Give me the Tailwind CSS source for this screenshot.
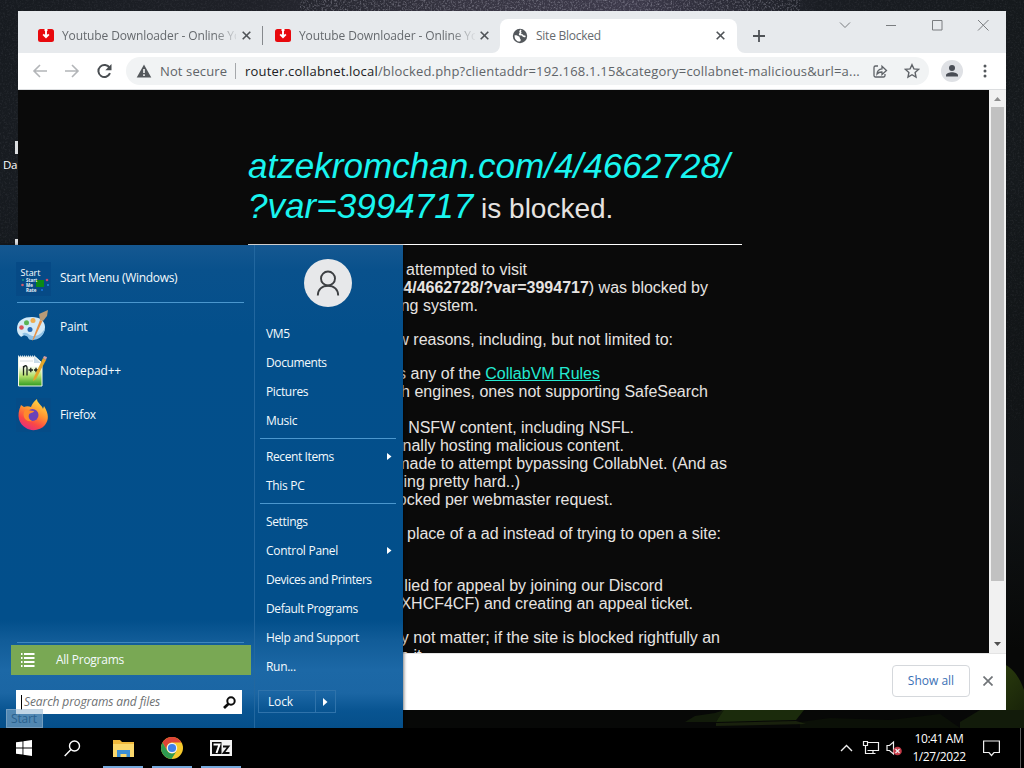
<!DOCTYPE html>
<html lang="en">
<head>
<meta charset="utf-8">
<title>Desktop</title>
<script src="https://cdn.jsdelivr.net/npm/@tailwindcss/browser@4"></script>
</head>
<body class="overflow-hidden">
<div class="relative w-[1024px] h-[768px] overflow-hidden bg-[#14181c] font-['Open_Sans','Noto_Sans',sans-serif]">

  <!-- wallpaper -->
  <svg class="absolute inset-0" width="1024" height="768" viewBox="0 0 1024 768">
    <defs>
      <linearGradient id="sky" x1="0" y1="0" x2="1" y2="0">
        <stop offset="0" stop-color="#171b20"/><stop offset=".25" stop-color="#1f2128"/><stop offset=".45" stop-color="#373542"/><stop offset=".62" stop-color="#3d3a4b"/><stop offset=".8" stop-color="#1a1d23"/><stop offset="1" stop-color="#15191c"/>
      </linearGradient>
      <linearGradient id="dusk" x1="0" y1="0" x2="0" y2="1">
        <stop offset="0" stop-color="#070908" stop-opacity="0"/><stop offset=".5" stop-color="#0b0d0e" stop-opacity=".5"/><stop offset=".8" stop-color="#070807"/>
      </linearGradient>
      <linearGradient id="hill" x1="0" y1="0" x2="1" y2="1">
        <stop offset="0" stop-color="#34490f"/><stop offset="1" stop-color="#141d08"/>
      </linearGradient>
      <filter id="stars" x="0" y="0" width="100%" height="100%">
        <feTurbulence type="fractalNoise" baseFrequency=".55" numOctaves="2" seed="4"/>
        <feColorMatrix values="0 0 0 0 .7  0 0 0 0 .7  0 0 0 0 .8  1.6 0 0 0 -.75"/>
      </filter>
    </defs>
    <rect width="1024" height="768" fill="url(#sky)"/>
    <rect x="300" width="500" height="12" filter="url(#stars)" opacity=".5"/>
    <rect width="1024" height="420" filter="url(#stars)" opacity=".12"/>
    <rect y="180" width="1024" height="588" fill="url(#dusk)"/>
    <path d="M1004 664c9 4 16 14 20 26v40h-60l30-20z" fill="url(#hill)"/>
    <path d="M722 710h82l-8 10-80 2z" fill="#1b2b0c"/>
    <path d="M685 722l10-6 20-3 9-3-8 12zM960 722l20-12h44v18h-64z" fill="#121b0a"/>
    <path d="M800 728v-6l30-4 60 2 50-6 20 14z" fill="#0b1007"/>
    <path d="M716 723l80-2 10 3-90 2z" fill="#2b3a14" opacity=".5"/>
  </svg>
  <div class="absolute left-[3px] top-[157px] text-[11.5px] leading-[16px] text-white tracking-[-0.3px]">Da</div>
  <div class="absolute left-[15px] top-[141px] w-[3px] h-[13px] bg-[#dcdee0]"></div>
  <div class="absolute left-[15px] top-[239px] w-[3px] h-[6px] bg-[#dcdee0]"></div>

  <!-- browser window -->
  <div class="absolute left-[18px] top-[11px] w-[988px] h-[699px] bg-white flex flex-col">
    <div class="h-[42px] bg-[#e7eaed] flex items-start text-[12px] text-[#666a6e] shrink-0">
      <div class="flex h-[42px] pt-[7px] pl-[20px] w-[245px] items-center">
        <svg class="shrink-0" width="16" height="13" viewBox="0 0 16 13"><rect width="16" height="13" rx="2.5" fill="#e8090d"/><path d="M8 2v6M5.2 5.4L8 8.2l2.8-2.8" fill="none" stroke="#fff" stroke-width="1.9"/><path d="M6.500 0h3v2h-3z" fill="#fff"/></svg>
        <div class="ml-[8px] w-[176px] overflow-hidden whitespace-nowrap tracking-[-0.12px] [mask-image:linear-gradient(to_right,#000_152px,transparent_178px)]">Youtube Downloader - Online Yo</div>
        <svg class="ml-[6px] shrink-0" width="9" height="9" viewBox="0 0 9 9"><path d="M.7.700l7.600 7.600M8.300.700L.7 8.300" stroke="#4f5357" stroke-width="1.600"/></svg>
        <div class="ml-[11px] w-px h-[19px] bg-[#86898d] shrink-0"></div>
      </div>
      <div class="flex h-[42px] pt-[7px] pl-[12px] w-[237px] items-center">
        <svg class="shrink-0" width="16" height="13" viewBox="0 0 16 13"><rect width="16" height="13" rx="2.5" fill="#e8090d"/><path d="M8 2v6M5.2 5.4L8 8.2l2.8-2.8" fill="none" stroke="#fff" stroke-width="1.9"/><path d="M6.500 0h3v2h-3z" fill="#fff"/></svg>
        <div class="ml-[8px] w-[176px] overflow-hidden whitespace-nowrap tracking-[-0.12px] [mask-image:linear-gradient(to_right,#000_152px,transparent_178px)]">Youtube Downloader - Online Yo</div>
        <svg class="ml-[5px] shrink-0" width="9" height="9" viewBox="0 0 9 9"><path d="M.7.700l7.600 7.600M8.300.700L.7 8.300" stroke="#4f5357" stroke-width="1.600"/></svg>
      </div>
      <div class="relative mt-[8px] h-[34px] w-[237px] bg-white rounded-t-[8px] flex items-center pl-[12px] pb-[1px]">
        <svg class="absolute left-[-8px] bottom-0" width="8" height="8"><path d="M8 0v8H0a8 8 0 0 0 8-8" fill="#fff"/></svg>
        <svg class="absolute right-[-8px] bottom-0" width="8" height="8"><path d="M0 0v8h8a8 8 0 0 1-8-8" fill="#fff"/></svg>
        <svg class="shrink-0" width="16" height="16" viewBox="0 0 16 16"><circle cx="8" cy="8" r="7.200" fill="#54585c"/><path d="M2.600 7.200c2-.2 3.600.5 4.600 1.400.9.900.3 1.800 1.100 2.300.9.600.4 1.800-.3 2.700-3.300.100-5.800-2.600-5.400-6.400z" fill="#fff"/><path d="M9.200 2.300c-1.200.7-1.400 1.400-.700 2 .8.700-.9 1-.9 1.900 0 .8 2.600.2 3 1.100.4 1 1.300 1.300 2.900.9" fill="none" stroke="#fff" stroke-width="1.600"/></svg>
        <div class="ml-[8px] w-[173px] whitespace-nowrap tracking-[-0.25px]">Site Blocked</div>
        <svg class="ml-[7px] shrink-0" width="9" height="9" viewBox="0 0 9 9"><path d="M.7.700l7.600 7.600M8.300.700L.7 8.300" stroke="#4f5357" stroke-width="1.600"/></svg>
      </div>
      <svg class="mt-[19px] ml-[16px]" width="12" height="12"><path d="M6 0v12M0 6h12" stroke="#4f5357" stroke-width="1.800"/></svg>
      <svg class="ml-auto mr-[15px] mt-[8px]" width="152" height="13" viewBox="0 0 152 13" fill="none" stroke="#7a7d80" stroke-width="1"><path d="M1 3.500l5 5 5-5M47 6.500h10M93.500 1.500h9.500v9.500h-9.500zM139 1l10.500 10.500M149.500 1l-10.500 10.500"/></svg>
    </div>

    <div class="h-[37px] flex items-center shrink-0 border-b border-[#dcdee0] text-[13px] text-[#606468]">
      <svg class="ml-[14px] shrink-0" width="84" height="18" viewBox="0 0 84 18" fill="none" stroke-width="1.600"><g stroke="#b3b5b8"><path d="M15 9H2M8 3L2 9l6 6M33 9h13M40 3l6 6-6 6"/></g><path d="M77.600 6A6 6 0 1 0 78 11.200" stroke="#494d51" stroke-width="2"/><path d="M79.500 2v6.200h-6.200z" fill="#494d51"/></svg>
      <div class="ml-[10px] w-[803px] h-[28px] rounded-full bg-[#f1f3f4] flex items-center whitespace-nowrap">
        <svg class="ml-[10px] shrink-0" width="16" height="14" viewBox="0 0 16 14"><path d="M8 .5L15.300 13.500H.7z" fill="#54585c"/><path d="M8 5v4M8 10.300v1.600" stroke="#fff" stroke-width="1.500"/></svg>
        <div class="ml-[8px] w-[68px] pt-[1px] tracking-[0.12px]">Not secure</div>
        <div class="ml-[7px] w-px h-[16px] bg-[#a5a8ab]"></div>
        <div class="ml-[9px] w-[616px] pt-[1px] tracking-[0.19px]"><span class="text-[#202124]">router.collabnet.local</span>/blocked.php?clientaddr=192.168.1.15&amp;category=collabnet-malicious&amp;url=a...</div>
        <svg class="ml-[11px] shrink-0" width="16" height="16" viewBox="0 0 16 16" fill="none" stroke="#5f6368" stroke-width="1.300"><path d="M6 3H3.500A1.500 1.500 0 0 0 2 4.500v8A1.500 1.500 0 0 0 3.500 14h8a1.500 1.500 0 0 0 1.500-1.500V11"/><path d="M5 11c.2-3.300 2-5 5-5.200V3.200l4.500 4.300-4.500 4V9C7.800 8.900 6.300 9.400 5 11z"/></svg>
        <svg class="ml-[16px] shrink-0" width="16" height="16" viewBox="0 0 16 16" fill="none" stroke="#5f6368" stroke-width="1.400"><path d="M8 1.700l1.900 4.200 4.600.500-3.400 3.100.9 4.500-4-2.300-4 2.300.9-4.500L1.500 6.400l4.600-.5z"/></svg>
      </div>
      <svg class="ml-[12px] shrink-0" width="22" height="22" viewBox="0 0 22 22"><circle cx="11" cy="11" r="11" fill="#dfe1e5"/><circle cx="11" cy="8" r="3" fill="#494d55"/><path d="M5 16.500v-1.300c0-2 3.500-3 6-3s6 1 6 3v1.300z" fill="#494d55"/></svg>
      <svg class="ml-[20px] shrink-0" width="4" height="14" fill="#54585c"><circle cx="2" cy="2" r="1.500"/><circle cx="2" cy="7" r="1.500"/><circle cx="2" cy="12" r="1.500"/></svg>
    </div>

    <div class="h-[563px] flex shrink-0">
      <div class="w-[971px] h-full overflow-hidden bg-[#0a0a0a] pl-[230px] text-[#e6e3e1] font-['Liberation_Sans',Arial,sans-serif] text-[16px] leading-[18px] whitespace-nowrap">
        <h1 class="w-[494px] h-[155px] pt-[59px] border-b border-white text-[28px] leading-[40px]"><em class="text-[35.1px] leading-[0px] text-[#19f5f0]">atzekromchan.com/4/4662728/<br>?var=3994717</em> is blocked.</h1>
        <div class="pt-[16px] flex flex-col items-start">
          <div class="w-[279px] text-right">attempted to visit</div>
          <div class="w-[460px] text-right"><b>4/4662728/?var=3994717</b>) was blocked by</div>
          <div class="w-[230px] text-right">ng system.</div>
          <div class="w-[425px] text-right mt-[16px]">w reasons, including, but not limited to:</div>
          <div class="w-[352px] text-right mt-[16px]">s any of the <span class="underline text-[#24ead2]">CollabVM Rules</span></div>
          <div class="w-[460px] text-right">h engines, ones not supporting SafeSearch</div>
          <div class="w-[386px] text-right mt-[18px]">NSFW content, including NSFL.</div>
          <div class="w-[376px] text-right">nally hosting malicious content.</div>
          <div class="w-[479px] text-right">made to attempt bypassing CollabNet. (And as</div>
          <div class="w-[272px] text-right">ing pretty hard..)</div>
          <div class="w-[365px] text-right">ocked per webmaster request.</div>
          <div class="w-[473px] text-right mt-[16px]">place of a ad instead of trying to open a site:</div>
          <div class="w-[415px] text-right mt-[34px]">lied for appeal by joining our Discord</div>
          <div class="w-[445px] text-right">XHCF4CF) and creating an appeal ticket.</div>
          <div class="w-[472px] text-right mt-[16px]">y not matter; if the site is blocked rightfully an</div>
          <div class="w-[178px] text-right">e it.</div>
        </div>
      </div>
      <div class="w-[17px] bg-[#f1f1f1] flex flex-col items-center">
        <svg width="17" height="17"><path d="M5 11l3.500-4 3.500 4z" fill="#8e8e8e"/></svg>
        <div class="w-[13px] h-[474px] bg-[#c1c1c1]"></div>
        <svg class="mt-auto" width="17" height="17"><path d="M5 6h7l-3.500 4z" fill="#505050"/></svg>
      </div>
    </div>

    <div class="flex-1 flex items-center justify-end border-t border-[#e4e4e4] pb-[2px]">
      <div class="w-[78px] h-[32px] border border-[#d5d8dc] rounded-[4px] flex items-center justify-center text-[12px] font-medium text-[#3a70b5]">Show all</div>
      <svg class="ml-[13px] mr-[13px]" width="10" height="10"><path d="M.5.500l9 9M9.500.500l-9 9" stroke="#707478" stroke-width="1.700"/></svg>
    </div>
  </div>

  <!-- start menu -->
  <div class="absolute left-0 top-[245px] w-[403px] h-[483px] flex text-[12px] text-[#f4fafd] font-medium shadow-[1px_0_3px_rgba(0,0,0,0.5)] bg-[linear-gradient(to_bottom,#155891_0px,#09518c_25px,#034f8b_90px,#024f8b_375px,#115c98_395px,#1c68a6_425px,#1b66a4_448px,#085491_466px,#054f8a_483px)] whitespace-nowrap">
    <div class="w-[254px] flex flex-col pl-[16px]">
      <div class="mt-[16px] flex items-center h-[36px]">
        <svg width="35" height="34" viewBox="0 0 35 34"><rect width="35" height="34" fill="#064a86"/><text x="4.500" y="13.500" font-family="Open Sans" font-size="9.500" font-weight="500" textLength="20" lengthAdjust="spacingAndGlyphs" fill="#fff">Start</text><rect x="20" y="18" width="8" height="7" fill="#0b8a17"/><g font-family="Open Sans" font-size="4.500" font-weight="700" fill="#e8f3fa"><text x="10" y="20">Start</text><text x="10" y="25">Me</text><text x="10" y="30">Rate</text></g><circle cx="6.500" cy="23" r="1.300" fill="#d45b6d"/><circle cx="7" cy="18" r="1" fill="#1b9a83"/><circle cx="31" cy="18" r="1.300" fill="#c9476a"/><circle cx="32" cy="23" r="1.100" fill="#2187d4"/><circle cx="26" cy="28" r="1.100" fill="#1b76d8"/></svg>
        <div class="ml-[9px] pb-[2px] tracking-[-0.3px]">Start Menu (Windows)</div>
      </div>
      <div class="mt-[5px] ml-[1px] w-[227px] h-px bg-[#4b97ce]"></div>
      <div class="mt-[2px] flex items-center h-[44px]">
        <svg class="ml-[-1px]" width="35" height="34" viewBox="0 0 35 34"><path d="M2 19C2 10 9 7 17 7c8 0 13 4 13 10 0 8-6 12-13 12-5 0-3-4-6-4-4 0-4 3-6 1-2-2-3-4-3-7z" fill="#d3eaf7"/><path d="M7 24c5-4 7 3 13 2 5-1 8-4 10-8-1 8-6 12-13 12-5 0-3-4-6-4z" fill="#8fc1e5"/><circle cx="6.500" cy="17.500" r="2.300" fill="#d9525a"/><circle cx="11.500" cy="12.800" r="2.500" fill="#5cb356"/><circle cx="18" cy="10.500" r="2.500" fill="#efad4f"/><circle cx="15" cy="19.500" r="2.500" fill="#2769b4"/><path d="M17 31l8-21 2.500 1L19 29z" fill="#e79044"/><path d="M25 10l-1-6 9-4-1 6-4 5z" fill="#b89b78"/></svg>
        <div class="ml-[10px] tracking-[-0.25px]">Paint</div>
      </div>
      <div class="flex items-center h-[44px]">
        <svg class="ml-[-1px]" width="35" height="34" viewBox="0 0 35 34"><defs><linearGradient id="np" x1="0" y1="0" x2="0" y2="1"><stop offset=".3" stop-color="#fff"/><stop offset=".65" stop-color="#b4e06b"/><stop offset="1" stop-color="#2f9b20"/></linearGradient></defs><path d="M3.500 3h17l6.500 6v23H3.500z" fill="url(#np)" stroke="#f3f8e8"/><path d="M3 2.500h18" stroke="#dfe6ec" stroke-width="2" stroke-dasharray="1 1"/><path d="M19 3l7 6h-7z" fill="#c9dbe8"/><path d="M5 7h13" stroke="#d6dde0"/><path d="M8.500 12v9.500M8.500 14c.5-2.500 3.500-3.500 3.500 0v7.500M13.500 16h4.500M15.800 13.800v4.500M19 16h4M21 13.800v4.500" fill="none" stroke="#1b221b" stroke-width="1.300"/><path d="M18 27l1-4L28 4l3 2-10 19z" fill="#e3a62b"/><path d="M28 4l1-2 3 1-1 3z" fill="#d8a0a0"/></svg>
        <div class="ml-[10px] tracking-[-0.14px]">Notepad++</div>
      </div>
      <div class="flex items-center h-[44px]">
        <svg width="35" height="34" viewBox="0 0 35 34"><defs><linearGradient id="fx" x1=".8" y1="0" x2=".3" y2="1"><stop offset="0" stop-color="#ffe24a"/><stop offset=".45" stop-color="#ff9330"/><stop offset=".75" stop-color="#fb4845"/><stop offset="1" stop-color="#e02c82"/></linearGradient></defs><rect width="35" height="34" fill="#074a84" opacity=".5"/><path d="M5 7l3 2c2-1 5-1 7 0 1-3 3-6 6-8 0 4 5 6 6 10l1-3c5 8 5 14 1 19-4 5-13 7-19 3C3 26 0 18 5 7z" fill="url(#fx)"/><circle cx="16.500" cy="17" r="6" fill="#6a42b8"/><path d="M9 12c4-1 5 1 9 1 0 2-4 1.500-5 3.500-1 2.500 0 5 3 6.500-4 1-7-1-8-4-1-3 0-5 1-7z" fill="#ff8a2c"/></svg>
        <div class="ml-[9px] tracking-[-0.38px]">Firefox</div>
      </div>
      <div class="mt-auto ml-[1px] w-[227px] h-px bg-[#3f87bd]"></div>
      <div class="mt-[2px] ml-[-5px] w-[240px] h-[30px] bg-[#79a854] flex items-center">
        <svg class="ml-[10px]" width="14" height="14" fill="#fff"><path d="M0 0h1.500v2H0zM0 4h1.500v2H0zM0 8h1.500v2H0zM0 12h1.500v2H0zM3 0h10.500v2H3zM3 4h10.500v2H3zM3 8h10.500v2H3zM3 12h10.500v2H3z"/></svg>
        <div class="ml-[21px] tracking-[-0.25px]">All Programs</div>
      </div>
      <div class="mt-[15px] mb-[14px] w-[226px] h-[24px] bg-white flex items-center text-[#6e7173] font-normal italic">
        <div class="ml-[5px] w-px h-[15px] bg-black"></div>
        <div class="ml-[2px] tracking-[-0.1px]">Search programs and files</div>
        <svg class="ml-auto mr-[6px]" width="13" height="13" fill="none" stroke="#0c0c0c"><circle cx="8" cy="5" r="3.700" stroke-width="2"/><path d="M5.500 7.800L1 12" stroke-width="2.800"/></svg>
      </div>
    </div>
    <div class="w-[149px] border-l border-[#22679f] flex flex-col pl-[11px]">
      <svg class="mt-[14px] ml-[38px] shrink-0" width="48" height="48" viewBox="0 0 48 48" fill="none" stroke="#3d3f42" stroke-width="1.900"><circle cx="24" cy="24" r="24" fill="#e7e8ea" stroke="none"/><circle cx="24" cy="19.500" r="7"/><path d="M13.800 36.500c0-6 4.200-9.800 10.200-9.800s10.200 3.800 10.200 9.800"/></svg>
      <div class="mt-[12px] h-[29px] flex items-center tracking-[-0.3px]">VM5</div>
      <div class="h-[29px] flex items-center tracking-[-0.4px]">Documents</div>
      <div class="h-[29px] flex items-center tracking-[-0.35px]">Pictures</div>
      <div class="h-[29px] flex items-center tracking-[-0.3px]">Music</div>
      <div class="mt-[3px] ml-[-6px] w-[136px] h-px bg-[#4b97ce]"></div>
      <div class="mt-[3px] h-[29px] flex items-center tracking-[-0.4px]">Recent Items<svg class="ml-auto mr-[11px]" width="5" height="7"><path d="M0 0l4.500 3.500L0 7z" fill="#fff"/></svg></div>
      <div class="h-[29px] flex items-center tracking-[-0.3px]">This PC</div>
      <div class="mt-[3px] ml-[-6px] w-[136px] h-px bg-[#4b97ce]"></div>
      <div class="mt-[3px] h-[29px] flex items-center tracking-[-0.35px]">Settings</div>
      <div class="h-[29px] flex items-center tracking-[-0.28px]">Control Panel<svg class="ml-auto mr-[11px]" width="5" height="7"><path d="M0 0l4.500 3.500L0 7z" fill="#fff"/></svg></div>
      <div class="h-[29px] flex items-center tracking-[-0.44px]">Devices and Printers</div>
      <div class="h-[29px] flex items-center tracking-[-0.4px]">Default Programs</div>
      <div class="h-[29px] flex items-center tracking-[-0.36px]">Help and Support</div>
      <div class="h-[29px] flex items-center tracking-[-0.3px]">Run...</div>
      <div class="mt-[9px] ml-[-8px] w-[78px] h-[23px] border border-[#2f73ab] flex items-center">
        <div class="w-[57px] h-full border-r border-[#2f73ab] pl-[9px] flex items-center tracking-[-0.15px]">Lock</div>
        <svg class="ml-[7px]" width="5" height="8"><path d="M0 0l4.500 4L0 8z" fill="#fff"/></svg>
      </div>
    </div>
  </div>

  <!-- fading tooltip -->
  <div class="absolute left-[6px] top-[709px] w-[37px] h-[19px] bg-[#8fb4d2]/55 border border-[#c3d2de]/30 text-[12px] leading-[17px] text-[#2b618d] pl-[4px] tracking-[-0.2px]">Start</div>

  <!-- taskbar -->
  <div class="absolute left-0 top-[728px] w-[1024px] h-[40px] bg-black flex items-center">
    <svg class="ml-[16px] shrink-0" width="16" height="16" viewBox="0 0 16 16" fill="#fff"><path d="M0 2.300L6.500 1.400V7.500H0zM7.400 1.200L16 0v7.500H7.400zM0 8.500h6.500v6.100L0 13.700zM7.400 8.500H16V16l-8.600-1.200z"/></svg>
    <svg class="ml-[32px] shrink-0" width="17" height="17" viewBox="0 0 17 17" fill="none" stroke="#fff" stroke-width="1.400"><circle cx="10.500" cy="6" r="5"/><path d="M7 9.500L.7 16"/></svg>
    <div class="ml-[22px] w-[40px] h-full flex justify-center items-center border-b-2 border-[#76a9dc]">
      <svg class="mt-[3px]" width="21" height="18" viewBox="0 0 21 18"><path d="M0 0h7l2 2h12v15H0z" fill="#f0b93c"/><path d="M0 4h21v13H0z" fill="#fbd86c"/><path d="M4 17v-7h13v7h-3.500v-3h-6v3z" fill="#3d8fd4"/></svg>
    </div>
    <div class="ml-[9px] w-[40px] h-full flex justify-center items-center border-b-2 border-[#76a9dc]">
      <svg class="mt-[2px]" width="22" height="22" viewBox="0 0 22 22"><circle cx="11" cy="11" r="11" fill="#f6c92c"/><path d="M1.500 5.500A11 11 0 0 1 20.500 5.500H11a5.500 5.500 0 0 0-4.800 8.200z" fill="#dd4437"/><path d="M1.500 5.500A11 11 0 0 0 10.500 22l5.300-8.300a5.500 5.500 0 0 1-9.500 0z" fill="#2e9a50"/><circle cx="11" cy="11" r="5.200" fill="#f3f3f3"/><circle cx="11" cy="11" r="4.100" fill="#3f80e8"/></svg>
    </div>
    <div class="ml-[9px] w-[40px] h-full flex justify-center items-center border-b-2 border-[#76a9dc]">
      <svg class="mt-[2px]" width="22" height="16" viewBox="0 0 22 16"><rect width="22" height="16" fill="#f2f2f2"/><rect x="2" y="2" width="9.500" height="12" fill="#0a0a0a"/><path d="M3.500 4.500h6l-3 8.500" fill="none" stroke="#fff" stroke-width="2"/><path d="M13 6.500h5.500l-5 6.500h6" fill="none" stroke="#0a0a0a" stroke-width="1.800"/></svg>
    </div>
    <svg class="ml-auto shrink-0" width="62" height="18" viewBox="0 0 62 18" fill="none" stroke="#f0f0f0" stroke-width="1.200"><path d="M1 12l5.500-5.500L12 12" stroke-width="1.400"/><path d="M27.500 3.500h11v8h-11M23.500 2.500h4v4h-4zM25.500 6.500v8H31M28.500 14.500h7M33 11.500v3"/><path d="M47 6.500h2.500l4-3.500v12l-4-3.500H47z"/><circle cx="57.500" cy="12" r="4.300" fill="#c53a48" stroke="none"/><path d="M55.500 10l4 4M59.500 10l-4 4"/></svg>
    <div class="ml-[7px] mr-px w-[60px] text-center text-[12px] leading-[18px] text-white tracking-[-0.4px] whitespace-nowrap">10:41 AM<br>1/27/2022</div>
    <svg class="ml-[13px] shrink-0" width="17" height="17" viewBox="0 0 17 17" fill="none" stroke="#f0f0f0" stroke-width="1.200"><path d="M.6 1h15.800v11.500H11l-2.500 3-2.500-3H.6z"/></svg>
    <div class="ml-[20px] mr-[3px] w-px h-full bg-[#5a5a5a]"></div>
  </div>
</div>
</body>
</html>
